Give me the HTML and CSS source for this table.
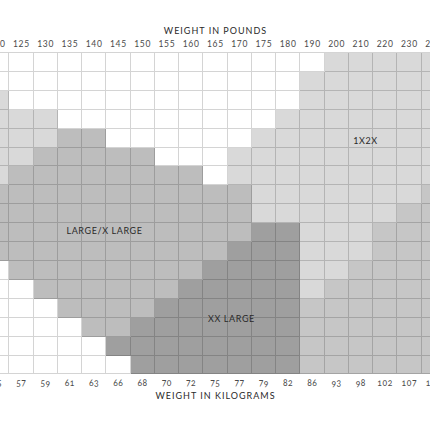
FILE: index.html
```html
<!DOCTYPE html>
<html lang="en">
<head>
    <meta charset="UTF-8">
    <meta name="viewport" content="width=device-width, initial-scale=1.0">
    <title>Size Chart</title>
    <link rel="stylesheet" href="styles.css">
</head>
<body>
    <div class="chart">
        <h2 class="axis-title">Weight in Pounds</h2>
        <ul class="scale scale-lbs"></ul>

        <div class="wrapper-grid">
            <div class="grid"></div>
            <span class="tag tag-large">LARGE/X LARGE</span>
            <span class="tag tag-1x2x">1X2X</span>
            <span class="tag tag-xx">XX LARGE</span>
        </div>

        <ul class="scale scale-kg"></ul>
        <h2 class="axis-title">Weight in Kilograms</h2>
    </div>

    <script>
        const lbs = [120, 125, 130, 135, 140, 145, 150, 155, 160, 165, 170, 175, 180, 190, 200, 210, 220, 230, 240]
        const kg = [55, 57, 59, 61, 63, 66, 68, 70, 72, 75, 77, 79, 82, 86, 93, 98, 102, 107, 111]

        // W white, A light, C large, D right, E xx large
        const rows = [
            'WWWWWWWWWWWWWWAAAAA',
            'WWWWWWWWWWWWWAAAAAA',
            'AWWWWWWWWWWWWAAAAAA',
            'AAAWWWWWWWWWAAAAAAA',
            'AAACCWWWWWWAAAAAAAA',
            'AACCCCCWWWAAAAAAAAA',
            'ACCCCCCCCWAAAAAAAAA',
            'CCCCCCCCCCCAAAAAAAD',
            'CCCCCCCCCCCAAAAAADD',
            'CCCCCCCCCCCEEAAADDD',
            'CCCCCCCCCCEEEAAADDD',
            'WCCCCCCCCEEEEAADDDD',
            'WWCCCCCCEEEEEADDDDD',
            'WWWCCCCEEEEEEDDDDDD',
            'WWWWCCEEEEEEEDDDDDD',
            'WWWWWEEEEEEEEDDDDDD',
            'WWWWWWEEEEEEEDDDDDD',
        ]

        const grid = document.querySelector('.grid')
        grid.innerHTML = rows.map(row =>
            row.split('').map(c => `<div class="cell cell-${c.toLowerCase()}"></div>`).join('')
        ).join('')

        document.querySelector('.scale-lbs').innerHTML = lbs.map(el => `<li>${el}</li>`).join('')
        document.querySelector('.scale-kg').innerHTML = kg.map(el => `<li>${el}</li>`).join('')
    </script>
</body>
</html>
```

FILE: styles.css
```css
:root {
    --white: #ffffff;
    --light: #d9d9d9;
    --large: #bdbdbd;
    --right: #c6c6c6;
    --xx: #9f9f9f;
    --line: rgba(0, 0, 0, 0.17);
    --ink: #2a2a2a;
}

body {
    margin: 0;
    padding: 0;
    background: var(--white);
    overflow: hidden;
    font-family: Lato, 'Open Sans', sans-serif;
    color: var(--ink);
}

.chart {
    width: 461px;
    margin-left: -15px;
    padding-top: 25px;
}

.axis-title {
    margin: 0;
    font-size: 9px;
    line-height: 12px;
    font-weight: 400;
    letter-spacing: 1px;
    text-transform: uppercase;
    text-align: center;
}

.scale {
    display: grid;
    grid-template-columns: repeat(19, 24.25px);
    margin: 2px 0 0;
    padding: 0;
    list-style: none;
    font-size: 8.5px;
    line-height: 10px;
    letter-spacing: 0.6px;
    color: #4a4a4a;
    text-align: center;
}

.scale-kg {
    margin: 4px 0 2px;
    font-variant-numeric: oldstyle-nums;
}

.wrapper-grid {
    position: relative;
    margin-top: 3px;
}

.grid {
    display: grid;
    grid-template-columns: repeat(19, 24.25px);
    grid-template-rows: repeat(17, 18.92px);
    border-top: 1px solid var(--line);
}

.cell {
    box-shadow: inset -1px -1px 0 var(--line);
}

.cell-w { background: var(--white); }
.cell-a { background: var(--light); }
.cell-c { background: var(--large); }
.cell-d { background: var(--right); }
.cell-e { background: var(--xx); }

.tag {
    position: absolute;
    transform: translate(-50%, -50%);
    font-size: 9px;
    line-height: 10px;
    letter-spacing: 0.6px;
    white-space: nowrap;
}

.tag-large {
    left: 119.5px;
    top: 178.5px;
}

.tag-1x2x {
    left: 380.5px;
    top: 88.5px;
}

.tag-xx {
    left: 246.5px;
    top: 266.5px;
}
```
